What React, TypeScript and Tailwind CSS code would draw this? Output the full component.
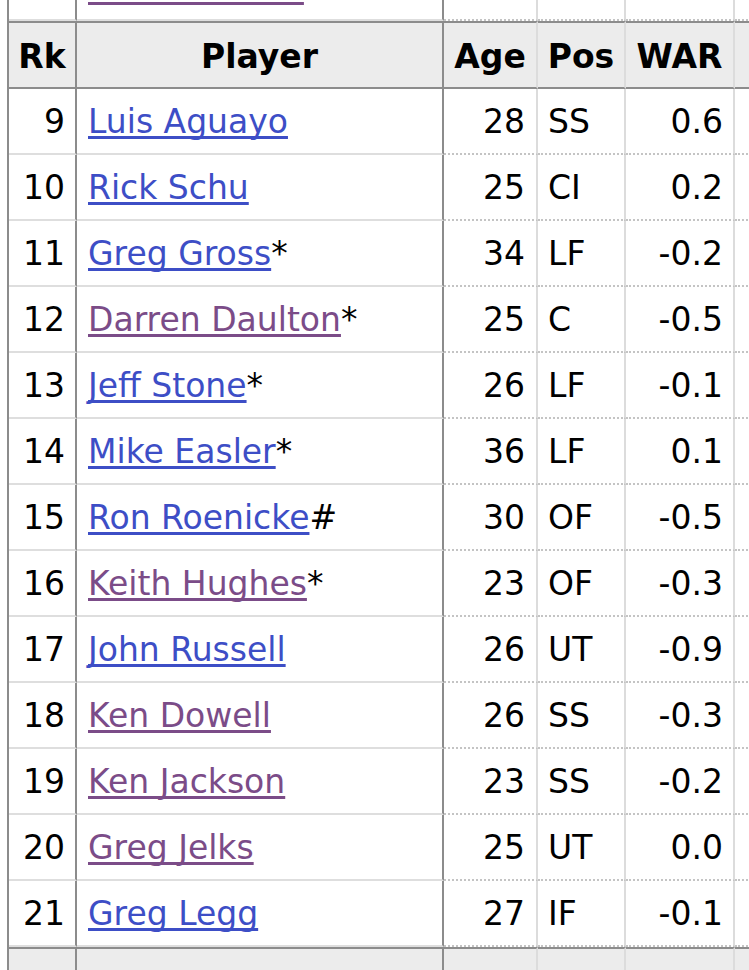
import React from "react";

type Player = {
  rk: number;
  name: string;
  mark?: string;
  visited?: boolean;
  age: number;
  pos: string;
  war: string;
};

const players: Player[] = [
  { rk: 8, name: "Glenn Wilson", visited: true, age: 28, pos: "RF", war: "0.6" },
  { rk: 9, name: "Luis Aguayo", age: 28, pos: "SS", war: "0.6" },
  { rk: 10, name: "Rick Schu", age: 25, pos: "CI", war: "0.2" },
  { rk: 11, name: "Greg Gross", mark: "*", age: 34, pos: "LF", war: "-0.2" },
  { rk: 12, name: "Darren Daulton", mark: "*", visited: true, age: 25, pos: "C", war: "-0.5" },
  { rk: 13, name: "Jeff Stone", mark: "*", age: 26, pos: "LF", war: "-0.1" },
  { rk: 14, name: "Mike Easler", mark: "*", age: 36, pos: "LF", war: "0.1" },
  { rk: 15, name: "Ron Roenicke", mark: "#", age: 30, pos: "OF", war: "-0.5" },
  { rk: 16, name: "Keith Hughes", mark: "*", visited: true, age: 23, pos: "OF", war: "-0.3" },
  { rk: 17, name: "John Russell", age: 26, pos: "UT", war: "-0.9" },
  { rk: 18, name: "Ken Dowell", visited: true, age: 26, pos: "SS", war: "-0.3" },
  { rk: 19, name: "Ken Jackson", visited: true, age: 23, pos: "SS", war: "-0.2" },
  { rk: 20, name: "Greg Jelks", visited: true, age: 25, pos: "UT", war: "0.0" },
  { rk: 21, name: "Greg Legg", age: 27, pos: "IF", war: "-0.1" },
];

// column widths include the right rule; Rk and Player close with a dark one
const rk = "w-[68px] shrink-0 border-r-2 border-r-[#8c8c8c]";
const player = "w-[367px] shrink-0 border-r-2 border-r-[#8c8c8c]";
const age = "w-[94px] shrink-0 border-r-2 border-r-[#dcdcdc]";
const pos = "w-[88px] shrink-0 border-r-2 border-r-[#dcdcdc]";
const war = "w-[109px] shrink-0 border-r-2 border-r-[#dcdcdc]";
const extra = "w-[80px] shrink-0";

const solidRow = "border-b-2 border-b-[#dedede]";
const dottedRow = "border-b-2 border-b-[#c4c4c4] [border-bottom-style:dotted]";

function BodyRow({ p, className = "" }: { p: Player; className?: string }) {
  const cell = "h-[66px] flex items-center pt-[2px]";
  return (
    <div className={`flex ${className}`}>
      <div className={`${cell} ${rk} ${solidRow} justify-end pr-[10px]`}>{p.rk}</div>
      <div className={`${cell} ${player} ${solidRow} pl-[11px] whitespace-nowrap`}>
        <a
          href="#"
          className={`underline decoration-[3px] underline-offset-[3px] [text-decoration-skip-ink:none] ${
            p.visited ? "text-[#7b4c88]" : "text-[#3d4ec6]"
          }`}
        >
          {p.name}
        </a>
        {p.mark && <span>{p.mark}</span>}
      </div>
      <div className={`${cell} ${age} ${dottedRow} justify-end pr-[11px]`}>{p.age}</div>
      <div className={`${cell} ${pos} ${dottedRow} pl-[10px]`}>{p.pos}</div>
      <div className={`${cell} ${war} ${dottedRow} justify-end pr-[10px]`}>{p.war}</div>
      <div className={`${cell} ${extra} ${dottedRow}`} />
    </div>
  );
}

export default function App() {
  const head = "h-[68px] flex items-center justify-center pt-1 bg-[#ececec] border-y-2 border-y-[#8c8c8c]";
  const foot = "h-[60px] bg-[#ececec] border-t-2 border-t-[#8c8c8c]";
  const [first, ...rest] = players;

  return (
    <div className="w-[749px] h-[970px] overflow-hidden bg-white">
      <div
        className="ml-[7px] w-[900px] border-l-2 border-l-[#8c8c8c] text-[33px] text-black"
        style={{ fontFamily: '"DejaVu Sans", Verdana, sans-serif' }}
      >
        <BodyRow p={first} className="-mt-[45px]" />

        <div className="flex font-bold">
          <div className={`${head} ${rk}`}>Rk</div>
          <div className={`${head} ${player}`}>Player</div>
          <div className={`${head} ${age}`}>Age</div>
          <div className={`${head} ${pos}`}>Pos</div>
          <div className={`${head} ${war}`}>WAR</div>
          <div className={`${head} ${extra}`} />
        </div>

        {rest.map((p) => (
          <BodyRow key={p.rk} p={p} />
        ))}

        <div className="flex">
          <div className={`${foot} ${rk}`} />
          <div className={`${foot} ${player}`} />
          <div className={`${foot} ${age}`} />
          <div className={`${foot} ${pos}`} />
          <div className={`${foot} ${war}`} />
          <div className={`${foot} ${extra}`} />
        </div>
      </div>
    </div>
  );
}
